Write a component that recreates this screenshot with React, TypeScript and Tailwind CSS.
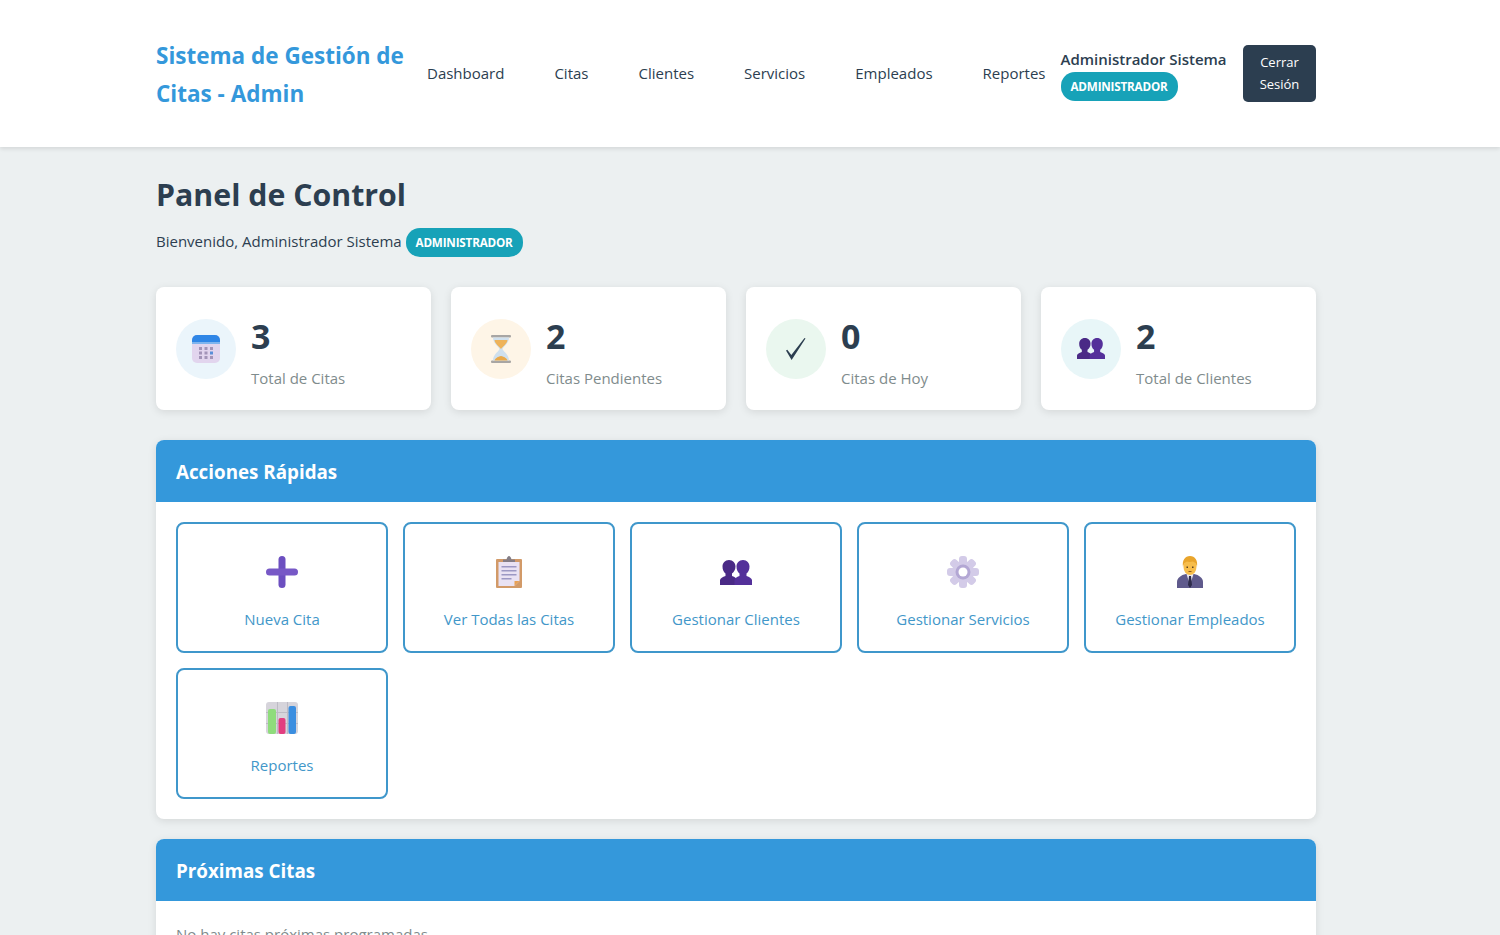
import React from "react";

const font = "font-['Open_Sans','Noto_Sans',sans-serif]";

function Badge() {
  return (
    <span className="inline-block rounded-[14px] bg-[#17a2b8] px-[10px] py-[5px] text-[11.7px] font-bold leading-[19px] tracking-[-0.2px] text-white">
      ADMINISTRADOR
    </span>
  );
}

function CalendarIcon() {
  return (
    <svg width="28" height="28" viewBox="0 0 28 28">
      <rect x="0" y="0" width="28" height="28" rx="5" fill="#e2d5ee" />
      <path d="M0 8V5a5 5 0 0 1 5-5h18a5 5 0 0 1 5 5v3z" fill="#2f86e6" />
      <rect x="0" y="7" width="28" height="2" fill="#7fb4ee" />
      {[12, 16.5, 21].map((y) =>
        [7, 12.5, 18].map((x) => (
          <rect key={`${x}-${y}`} x={x} y={y} width="3" height="3" fill={x === 18 && y === 16.5 ? "#5a8fd8" : "#a394b8"} />
        ))
      )}
    </svg>
  );
}

function HourglassIcon() {
  return (
    <svg width="22" height="28" viewBox="0 0 22 28">
      <rect x="1" y="0" width="20" height="2.5" rx="1" fill="#a8a6a4" />
      <rect x="1" y="25.5" width="20" height="2.5" rx="1" fill="#a8a6a4" />
      <path d="M3 2.5h16c0 6-5 8-6.500 11.500 1.500 3.500 6.500 5.500 6.500 11.500H3c0-6 5-8 6.500-11.500C8 10.500 3 8.500 3 2.500z" fill="#cfe0ee" />
      <path d="M4.500 5h13c-.5 4-4.500 6-6.500 9-2-3-6-5-6.500-9z" fill="#eeb35a" />
      <path d="M4.500 25.500c.5-2 3.500-4 6.500-4.500 3 .5 6 2.500 6.500 4.500z" fill="#e9a94a" />
    </svg>
  );
}

function CheckIcon() {
  return (
    <svg width="20" height="22" viewBox="0 0 20 22">
      <path d="M0 12.500l1.300-.8 4 5.300L18.500 0l1 .6L5.600 22z" fill="#2c3e50" />
    </svg>
  );
}

function PeopleIcon({ size = 32 }: { size?: number }) {
  return (
    <svg width={size} height={(size * 25) / 32} viewBox="0 0 32 25">
      <path d="M9 0c4 0 6.500 3 6.500 6.500 0 3-1.500 5.500-3.500 7v2.500c3 1 4.500 2 5 4v5H0v-5c.5-2 2.500-3 5.500-4v-2.500c-2-1.500-3-4-3-7C2.500 3 5 0 9 0z" fill="#4a2a86" />
      <path d="M23 0c4 0 6.500 3 6.500 6.500 0 3-1 5.500-3 7v2.500c3 1 5 2 5.500 4v5H14.500v-5c.5-2 2-3 5-4v-2.500c-2-1.500-3-4-3-7C16.500 3 19 0 23 0z" fill="#54309a" />
    </svg>
  );
}

function PlusIcon() {
  return (
    <svg width="32" height="32" viewBox="0 0 32 32">
      <rect x="12.500" y="0" width="7" height="32" rx="3.500" fill="#6c4fc0" />
      <rect x="0" y="12.500" width="32" height="7" rx="3.500" fill="#7758c6" />
    </svg>
  );
}

function ClipboardIcon() {
  return (
    <svg width="26" height="32" viewBox="0 0 26 32">
      <rect x="0" y="3" width="26" height="29" rx="1" fill="#d29a68" />
      <path d="M2.500 6h21v19l-5 5h-16z" fill="#e9e2f3" />
      <path d="M18.500 30l5-5h-5z" fill="#e8a055" />
      <path d="M7 6V3.500h3.500C11 1.500 12 0 13 0s2 1.500 2.500 3.500H19V6z" fill="#847d85" />
      {[10, 14, 18, 22].map((y) => (
        <rect key={y} x="5.500" y={y} width={y === 22 ? 10 : 15} height="1.5" fill="#9c98c4" />
      ))}
    </svg>
  );
}

function GearIcon() {
  return (
    <svg width="32" height="32" viewBox="0 0 32 32">
      {[0, 45, 90, 135, 180, 225, 270, 315].map((r) => (
        <rect key={r} x="12" y="0" width="8" height="10" rx="3" fill="#d3cbe8" transform={`rotate(${r} 16 16)`} />
      ))}
      <circle cx="16" cy="16" r="11" fill="#d3cbe8" />
      <circle cx="16" cy="16" r="7.500" fill="#b3a7d4" />
      <circle cx="16" cy="16" r="4.500" fill="#ffffff" />
    </svg>
  );
}

function EmployeeIcon() {
  return (
    <svg width="26" height="32" viewBox="0 0 26 32">
      <path d="M0 32v-6c0-4 4-7 9-8h8c5 1 9 4 9 8v6z" fill="#5f5a8c" />
      <path d="M9.500 18h7l-3.500 11z" fill="#eceaf2" />
      <path d="M12 20h2l1 9-2 3-2-3z" fill="#2d2b4a" />
      <ellipse cx="13" cy="11" rx="6.500" ry="8" fill="#f7bd4a" />
      <path d="M6 11C5 4 8 0 13 0s8 4 7 11c-.5-3-2-5-4-5.500-2 .5-5 .5-6 0-2 .5-3.500 2.500-4 5.500z" fill="#e9a52c" />
      <rect x="9.500" y="10.500" width="1.500" height="1.500" fill="#5c4020" />
      <rect x="15" y="10.500" width="1.500" height="1.500" fill="#5c4020" />
      <rect x="11.500" y="15" width="3" height="1" fill="#8a5a20" />
    </svg>
  );
}

function ChartIcon() {
  return (
    <svg width="32" height="32" viewBox="0 0 32 32">
      <rect x="0" y="0" width="32" height="32" rx="3" fill="#d6d4db" />
      <rect x="11" y="0" width="1" height="32" fill="#bdbbc4" />
      <rect x="21" y="0" width="1" height="32" fill="#bdbbc4" />
      <rect x="0" y="10" width="32" height="1" fill="#bdbbc4" />
      <rect x="0" y="21" width="32" height="1" fill="#bdbbc4" />
      <rect x="2" y="7" width="8" height="25" rx="2" fill="#8fdc7c" />
      <rect x="12.500" y="16" width="7" height="16" rx="2" fill="#e23e80" />
      <rect x="22.500" y="4" width="7.500" height="28" rx="2" fill="#3b8ee0" />
    </svg>
  );
}

const stats = [
  { icon: <CalendarIcon />, bg: "bg-[#ebf5fb]", value: "3", label: "Total de Citas" },
  { icon: <HourglassIcon />, bg: "bg-[#fef5e7]", value: "2", label: "Citas Pendientes" },
  { icon: <CheckIcon />, bg: "bg-[#eaf7ef]", value: "0", label: "Citas de Hoy" },
  { icon: <PeopleIcon size={28} />, bg: "bg-[#e8f6f8]", value: "2", label: "Total de Clientes" },
];

const actions = [
  { icon: <PlusIcon />, label: "Nueva Cita" },
  { icon: <ClipboardIcon />, label: "Ver Todas las Citas" },
  { icon: <PeopleIcon />, label: "Gestionar Clientes" },
  { icon: <GearIcon />, label: "Gestionar Servicios" },
  { icon: <EmployeeIcon />, label: "Gestionar Empleados" },
  { icon: <ChartIcon />, label: "Reportes" },
];

const navItems = ["Dashboard", "Citas", "Clientes", "Servicios", "Empleados", "Reportes"];

export default function App() {
  return (
    <div className={`h-[935px] overflow-hidden bg-[#ecf0f1] text-[#2c3e50] ${font}`}>
      <header className="bg-white shadow-[0_2px_4px_rgba(0,0,0,0.1)]">
        <div className="ml-[136px] flex h-[147px] w-[1200px] items-center px-5">
          <h1 className="w-[256px] pt-[2px] text-[22.5px] font-bold leading-[38px] text-[#3498db]">Sistema de Gestión de Citas - Admin</h1>
          <nav className="ml-[15px] flex gap-[50px] text-[15px] text-[#2c3e50]">
            {navItems.map((item) => (
              <a key={item}>{item}</a>
            ))}
          </nav>
          <div className="ml-[15px] flex flex-col items-start">
            <span className="whitespace-nowrap pt-[1px] text-[15px] font-semibold leading-[25px]">Administrador Sistema</span>
            <Badge />
          </div>
          <button className="ml-auto h-[57px] w-[73px] rounded-[5px] bg-[#2c3e50] pb-[2px] text-[13px] leading-[22px] text-white">
            Cerrar Sesión
          </button>
        </div>
      </header>

      <main className="ml-[136px] w-[1200px] px-5 pt-[22px]">
        <h2 className="text-[30.3px] font-bold leading-[52px]">Panel de Control</h2>
        <p className="mt-[6px] text-[15px] leading-[29px]">
          Bienvenido, Administrador Sistema <Badge />
        </p>

        <div className="mt-[30px] grid grid-cols-4 gap-5">
          {stats.map((s) => (
            <div key={s.label} className="flex h-[123px] items-center gap-[15px] rounded-lg bg-white p-5 shadow-[0_2px_8px_rgba(0,0,0,0.1)]">
              <div className={`flex h-[60px] w-[60px] items-center justify-center rounded-full ${s.bg}`}>{s.icon}</div>
              <div className="pt-[6px]">
                <div className="text-[34px] font-bold leading-[46px]">{s.value}</div>
                <div className="mt-[6px] text-[15px] leading-[26px] text-[#7f8c8d]">{s.label}</div>
              </div>
            </div>
          ))}
        </div>

        <section className="mt-[30px] overflow-hidden rounded-lg bg-white shadow-[0_2px_8px_rgba(0,0,0,0.1)]">
          <h3 className="bg-[#3498db] px-5 pb-[14px] pt-[16px] text-[18.8px] font-bold leading-8 text-white">Acciones Rápidas</h3>
          <div className="grid grid-cols-5 gap-[15px] p-5">
            {actions.map((a) => (
              <a key={a.label} className="flex h-[131px] flex-col items-center gap-[18px] rounded-lg border-2 border-[#3f97cb] pt-[32px] text-[15px] leading-[26px] text-[#4297c9]">
                <span className="flex h-[32px] items-center justify-center">{a.icon}</span>
                {a.label}
              </a>
            ))}
          </div>
        </section>

        <section className="mt-5 overflow-hidden rounded-lg bg-white shadow-[0_2px_8px_rgba(0,0,0,0.1)]">
          <h3 className="bg-[#3498db] px-5 pb-[14px] pt-[16px] text-[18.8px] font-bold leading-8 text-white">Próximas Citas</h3>
          <p className="p-5 text-[15px] leading-[26px] text-[#7f8c8d]">No hay citas próximas programadas</p>
        </section>
      </main>
    </div>
  );
}
